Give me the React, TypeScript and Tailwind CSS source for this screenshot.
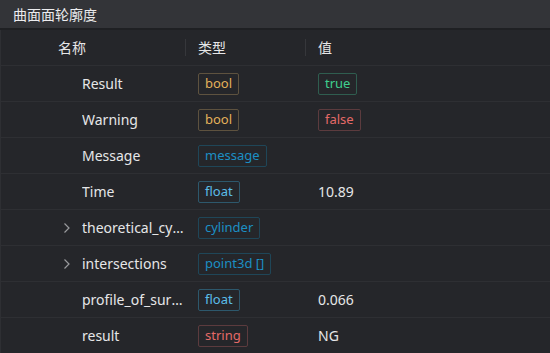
import React from "react";

type Tone = "bool" | "true" | "false" | "msg" | "float" | "str";

const toneCls: Record<Tone, string> = {
  bool: "text-[#e3b15a] border-[#5e523f]",
  true: "text-[#3fcf8e] border-[#2f5d4f]",
  false: "text-[#e46a68] border-[#5c3b3e]",
  msg: "text-[#1c8fc4] border-[#1f4658]",
  float: "text-[#5bbde8] border-[#2d586c]",
  str: "text-[#e46a68] border-[#5c3b3e]",
};

function Badge({ text, tone }: { text: string; tone: Tone }) {
  return (
    <span
      className={`inline-flex h-[22px] items-center rounded-[2px] border px-[6px] text-[13px] leading-none ${toneCls[tone]}`}
    >
      {text}
    </span>
  );
}

type Row = {
  name: string;
  expand?: boolean;
  type: { text: string; tone: Tone };
  value?: { text: string; tone: Tone } | string;
};

const rows: Row[] = [
  { name: "Result", type: { text: "bool", tone: "bool" }, value: { text: "true", tone: "true" } },
  { name: "Warning", type: { text: "bool", tone: "bool" }, value: { text: "false", tone: "false" } },
  { name: "Message", type: { text: "message", tone: "msg" } },
  { name: "Time", type: { text: "float", tone: "float" }, value: "10.89" },
  { name: "theoretical_cylinder", expand: true, type: { text: "cylinder", tone: "msg" } },
  { name: "intersections", expand: true, type: { text: "point3d []", tone: "msg" } },
  { name: "profile_of_surface", type: { text: "float", tone: "float" }, value: "0.066" },
  { name: "result", type: { text: "string", tone: "str" }, value: "NG" },
];

function Chevron() {
  return (
    <svg width="8" height="12" viewBox="0 0 8 12" className="text-[#9a9b9e]">
      <path d="M1.5 1.5 L6 6 L1.5 10.5" fill="none" stroke="currentColor" strokeWidth="1.2" />
    </svg>
  );
}

export default function App() {
  return (
    <div
      className="h-[353px] w-[550px] overflow-hidden bg-[#25262a] text-[#e6e6e8]"
      style={{ fontFamily: '"Noto Sans", "Noto Sans CJK SC", sans-serif' }}
    >
      <div className="flex h-[30px] items-center border-b-2 border-[#1f2023] bg-[#333438] pl-[13px] text-[14px] text-[#ececee]">
        曲面面轮廓度
      </div>
      <div className="border-l border-[#2e2f33]">
        <div className="flex h-[36px] items-center border-b border-[#2e2f33] text-[14px]">
          <div className="flex h-full w-[184px] items-center pl-[57px]">名称</div>
          <div className="h-[17px] w-px bg-[#36373b]" />
          <div className="flex h-full w-[119px] items-center pl-[12px]">类型</div>
          <div className="h-[17px] w-px bg-[#36373b]" />
          <div className="flex h-full flex-1 items-center pl-[12px]">值</div>
        </div>
        {rows.map((r) => (
          <div key={r.name} className="flex h-[36px] items-center border-b border-[#2e2f33] text-[14px]">
            <div className="flex h-full w-[185px] items-center pl-[62px]">
              <div className="flex w-[19px] items-center">{r.expand ? <Chevron /> : null}</div>
              <span className="min-w-0 flex-1 truncate">{r.name}</span>
            </div>
            <div className="flex h-full w-[120px] items-center pl-[12px]">
              <Badge text={r.type.text} tone={r.type.tone} />
            </div>
            <div className="flex h-full flex-1 items-center pl-[12px]">
              {typeof r.value === "string" ? (
                <span>{r.value}</span>
              ) : r.value ? (
                <Badge text={r.value.text} tone={r.value.tone} />
              ) : null}
            </div>
          </div>
        ))}
      </div>
    </div>
  );
}
